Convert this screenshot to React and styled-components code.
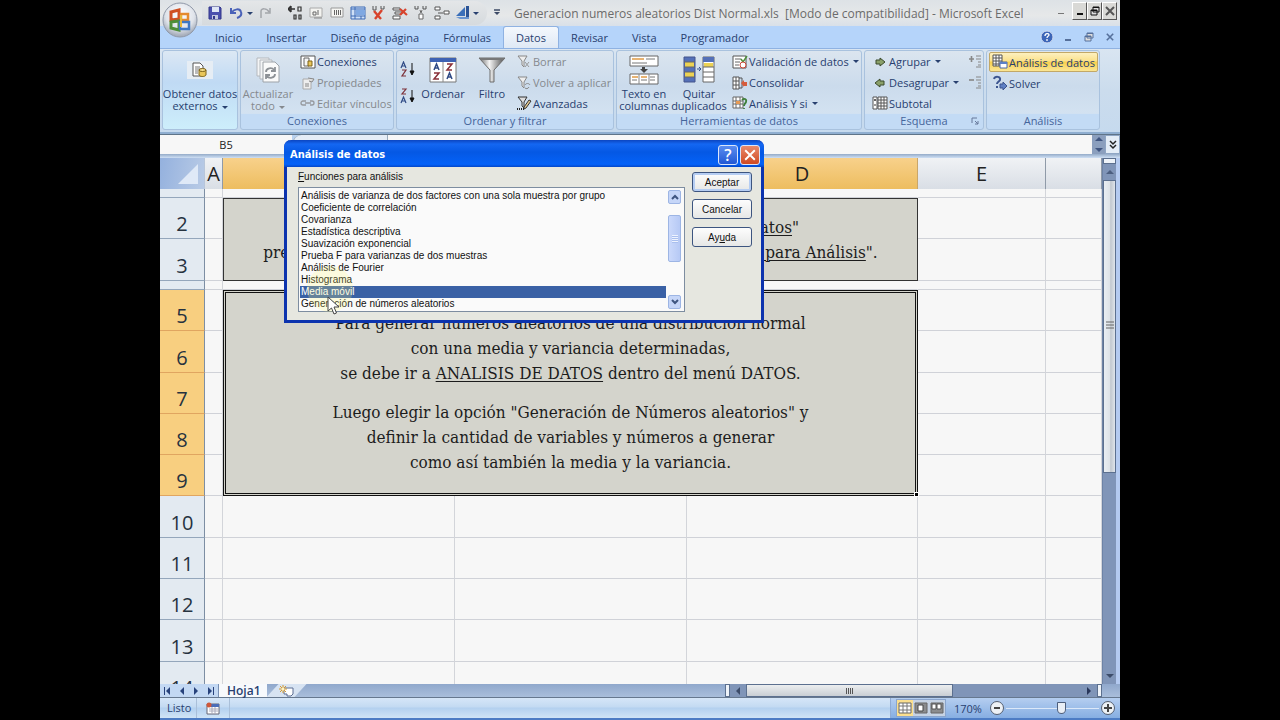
import React, { useState } from "react"
import styled, { createGlobalStyle, css } from "styled-components"

const rows = [
  { n: 1, h: 9, cut: true },
  { n: 2, h: 41 },
  { n: 3, h: 42 },
  { n: 4, h: 9, cut: true },
  { n: 5, h: 41, active: true },
  { n: 6, h: 42, active: true },
  { n: 7, h: 41, active: true },
  { n: 8, h: 41, active: true },
  { n: 9, h: 41, active: true },
  { n: 10, h: 42 },
  { n: 11, h: 41 },
  { n: 12, h: 41 },
  { n: 13, h: 42 },
  { n: 14, h: 41 },
]

const tools = [
  "Análisis de varianza de dos factores con una sola muestra por grupo",
  "Coeficiente de correlación",
  "Covarianza",
  "Estadística descriptiva",
  "Suavización exponencial",
  "Prueba F para varianzas de dos muestras",
  "Análisis de Fourier",
  "Histograma",
  "Media móvil",
  "Generación de números aleatorios",
]

const tabs = [
  "Inicio",
  "Insertar",
  "Diseño de página",
  "Fórmulas",
  "Datos",
  "Revisar",
  "Vista",
  "Programador",
]

/* ---------- icons ---------- */

const Svg = ({ w = 16, h = 16, children }) => (
  <svg width={w} height={h} viewBox={`0 0 ${w} ${h}`} fill="none" aria-hidden="true">
    {children}
  </svg>
)

const OfficeLogo = () => (
  <svg width="36" height="36" viewBox="0 0 36 36" fill="none" aria-hidden="true">
    <defs>
      <radialGradient id="orb" cx="50%" cy="35%" r="60%">
        <stop offset="0" stopColor="#ffffff" />
        <stop offset="0.7" stopColor="#dfe3ea" />
        <stop offset="1" stopColor="#a9b0bd" />
      </radialGradient>
    </defs>
    <circle cx="18" cy="18" r="17" fill="url(#orb)" stroke="#8f98a8" />
    <path d="M9 10l8-2v9l-8 1z" stroke="#cf4f22" strokeWidth="3" />
    <path d="M19 12h7v6h-7z" stroke="#e58a2e" strokeWidth="2.5" />
    <path d="M9 20l8-1v9l-8-2z" stroke="#4f8f38" strokeWidth="3" />
    <path d="M18 20h9v7h-9z" stroke="#3d78c4" strokeWidth="2.5" />
    <path d="M19 13v12" stroke="#e8b73a" strokeWidth="2" />
  </svg>
)

const SaveIcon = () => (
  <Svg w={14} h={14}>
    <path d="M1 1h11l1 1v11H1z" fill="#4a4fae" stroke="#33378a" />
    <path d="M4 1h7v5H4z" fill="#dfe6f6" />
    <path d="M4 9h6v4H4z" fill="#c3c8e0" />
    <path d="M5 10h2v3H5z" fill="#33378a" />
  </Svg>
)
const UndoIcon = () => (
  <Svg w={14} h={14}>
    <path d="M2 2v5h5" stroke="#4a62b8" strokeWidth="2" />
    <path d="M3 6c2-3 8-4 9 0 1 3-1 5-4 6" stroke="#4a62b8" strokeWidth="2" />
  </Svg>
)
const RedoIcon = () => (
  <Svg w={14} h={14}>
    <path d="M3 12V5c0-3 6-3 8 1M12 2v5H7" stroke="#a3a6ab" strokeWidth="1.5" />
  </Svg>
)
const PrecisionIcon = () => (
  <Svg w={14} h={16}>
    <path d="M0 4h7M3 1v6M3 1L0 4l3 3" stroke="#333" strokeWidth="1.4" />
    <path d="M10 2h3v4h-3zM6 10h2v4H6zM11 10h2v4h-2z" stroke="#333" strokeWidth="1.2" />
  </Svg>
)
const LabelIcon = () => (
  <Svg w={14} h={14}>
    <path d="M1 2h12v9H1z" fill="#f3f3f0" stroke="#aaa" />
    <path d="M4 6h3v3H4zM9 4v5" stroke="#666" />
    <path d="M5 12h8" stroke="#888" />
  </Svg>
)
const BarsIcon = () => (
  <Svg w={14} h={14}>
    <path d="M1 2h12v9H1z" fill="#f6f6f3" stroke="#999" />
    <path d="M4.5 4v5M6.5 4v5M8.5 4v5M10.5 4v5" stroke="#666" />
  </Svg>
)
const FreezeIcon = () => (
  <Svg w={16} h={14}>
    <path d="M1 1h14v12H1z" fill="#cfe0f7" stroke="#3c6ab5" />
    <path d="M1 3h14M1 10h14M5 1v12M11 10v3" stroke="#3c6ab5" />
    <path d="M6 4h9v5H6z" fill="#7fa8e2" />
  </Svg>
)
const DeleteColIcon = () => (
  <Svg w={14} h={16}>
    <path d="M1 1v4h3V1M9 1v3h3V1" stroke="#555" />
    <path d="M2 6l7 8M10 5l-7 9" stroke="#d8432c" strokeWidth="2.4" />
  </Svg>
)
const DeleteRowIcon = () => (
  <Svg w={16} h={14}>
    <path d="M1 2h7v2H1zM1 10h7v3H1zM3 6h7v2H3z" fill="#fff" stroke="#555" />
    <path d="M8 3l7 6M14 3L8 9" stroke="#d8432c" strokeWidth="2.2" />
  </Svg>
)
const InsertColIcon = () => (
  <Svg w={14} h={16}>
    <path d="M1 1v3h3V1M9 1v3h3V1" stroke="#555" />
    <path d="M5 9h4v5H5zM6 5l1 3 1-3" fill="#fff" stroke="#666" />
  </Svg>
)
const InsertRowIcon = () => (
  <Svg w={16} h={14}>
    <path d="M1 1h5v3H1zM1 10h5v3H1zM10 5h5v3h-5z" fill="#fff" stroke="#555" />
    <path d="M4 7h5" stroke="#555" />
  </Svg>
)
const SailIcon = () => (
  <Svg w={16} h={14}>
    <path d="M10 1v9L1 10z" fill="#3b6fb9" />
    <path d="M11 0h3v13h-3z" fill="#2c5496" />
    <path d="M1 11h13v2H5z" fill="#6a95d1" />
  </Svg>
)

const DocDataIcon = () => (
  <Svg w={20} h={18}>
    <path d="M3 2h7l3 3v10H3z" fill="#fff" stroke="#555" />
    <path d="M5 6h5M5 8h5M5 10h3M5 12h3" stroke="#777" />
    <path d="M9 9v5c1 2 6 2 7 0V9" fill="#e9c65a" stroke="#7c6218" />
    <ellipse cx="12.5" cy="9" rx="3.5" ry="1.5" fill="#f5dd8a" stroke="#7c6218" />
  </Svg>
)
const RefreshDocsIcon = () => (
  <Svg w={26} h={28}>
    <path d="M2 2h12v18H2z" fill="#f4f5f6" stroke="#b4b8bd" />
    <path d="M5 4h12v19H5z" fill="#f4f5f6" stroke="#b4b8bd" />
    <path d="M8 6h12l4 4v16H8z" fill="#fafafa" stroke="#9da2a8" />
    <path d="M11 16c0-4 6-5 8-2M20 11v4h-4M20 18c0 4-6 5-8 2M11 23v-4h4" stroke="#8d9196" strokeWidth="1.8" />
  </Svg>
)
const ConnIcon = () => (
  <Svg w={16} h={14}>
    <path d="M1 1h14v12H1z" fill="#fff" stroke="#555" />
    <path d="M4 3h5v8H4z" fill="#f5f5f5" stroke="#666" />
    <path d="M8 6h4v5H8z" fill="#e9c65a" stroke="#7c6218" />
  </Svg>
)
const PropsIcon = () => (
  <Svg w={16} h={14}>
    <path d="M3 3h8v10H3z" fill="#eee" stroke="#aaa" />
    <path d="M5 8h4M5 10h4M8 2l6 1-2 3-3-1" fill="#ddd" stroke="#888" />
  </Svg>
)
const LinkIcon = () => (
  <Svg w={16} h={14}>
    <path d="M6 5H3a2 2 0 000 4h3M10 5h2a2 2 0 010 4h-2M5 7h6" stroke="#96999e" strokeWidth="1.3" />
  </Svg>
)
const SortIcon = ({ desc }) => (
  <Svg w={16} h={16}>
    <g stroke={desc ? "#7d3038" : "#2f4a85"} strokeWidth="1.2">
      {desc ? <path d="M2 1h4L2 6h4" /> : <path d="M1 7l2.5-6L6 7M2 5h3" />}
    </g>
    <g stroke={desc ? "#2f4a85" : "#7d3038"} strokeWidth="1.2">
      {desc ? <path d="M1 15l2.5-6L6 15M2 13h3" /> : <path d="M2 9h4l-4 6h4" />}
    </g>
    <path d="M12 2v11M10 10l2 4 2-4z" stroke="#111" fill="#111" />
  </Svg>
)
const SortDialogIcon = () => (
  <Svg w={28} h={26}>
    <path d="M1 1h26v24H1z" fill="#fff" stroke="#777" />
    <path d="M1 1h26v4H1z" fill="#3e62b3" />
    <path d="M14 5v20" stroke="#888" />
    <path d="M5 13l2.5-6 2.5 6M6 11h3M18 22l2.5-6 2.5 6M19 20h3" stroke="#2f4a85" strokeWidth="1.5" />
    <path d="M5 16h5l-5 6h5M18 7h5l-5 6h5" stroke="#8a3038" strokeWidth="1.5" />
  </Svg>
)
const FunnelIcon = () => (
  <Svg w={28} h={28}>
    <defs>
      <linearGradient id="metal">
        <stop offset="0" stopColor="#666" />
        <stop offset="0.4" stopColor="#f4f4f4" />
        <stop offset="1" stopColor="#4b4b4b" />
      </linearGradient>
    </defs>
    <path d="M1 2h26L16 14v12h-4V14z" fill="url(#metal)" stroke="#6c6c6c" />
    <path d="M1 2h26l-2 2H3z" fill="#777" />
  </Svg>
)
const MiniFunnel = ({ kind }) => (
  <Svg w={16} h={16}>
    <path
      d="M2 2h9L8 7v6L6 11V7z"
      fill={kind === "adv" ? "#ddd" : "#eee"}
      stroke={kind === "adv" ? "#333" : "#888"}
    />
    {kind === "clear" && <path d="M9 8l4 5M13 8l-4 5" stroke="#999" />}
    {kind === "again" && <path d="M9 10c1-2 4-2 5 0M13 12c-1 2-3 2-4 1" stroke="#888" />}
    {kind === "adv" && (
      <>
        <path d="M8 12l5-7 2 1-5 7-2 1z" fill="#e3c68c" stroke="#333" />
        <path d="M1 14h8" stroke="#222" strokeDasharray="1 1" strokeWidth="2" />
      </>
    )}
  </Svg>
)
const TextColsIcon = () => (
  <Svg w={30} h={30}>
    <path d="M1 1h28v10H1zM1 19h28v10H1z" fill="#fff" stroke="#666" />
    <path d="M3 4h12M3 22h6M12 22h6" stroke="#e09a45" strokeWidth="1.6" />
    <path d="M17 4h9M3 8h15M3 25h5M12 25h6M21 25h5M21 22h5" stroke="#777" />
    <path d="M10 19v10M20 19v10" stroke="#888" />
    <path d="M13 12h3v2h3l-4 4-4-4h2z" fill="#444" />
  </Svg>
)
const DupIcon = () => (
  <Svg w={32} h={28}>
    <path d="M1 1h11v25H1z" fill="#5470b8" stroke="#44558c" />
    <path d="M2 6h9v5H2zM2 16h9v5H2z" fill="#ecd254" />
    <path d="M20 1h11v25H20z" fill="#fff" stroke="#666" />
    <path d="M20 1h11v5H20z" fill="#5470b8" />
    <path d="M21 7h9v4h-9z" fill="#ecd254" />
    <path d="M20 11h11M20 16h11M20 21h11M1 6h11M1 11h11M1 16h11M1 21h11" stroke="#666" />
    <path d="M14 13h4M16 11l2 2-2 2" stroke="#33518f" />
  </Svg>
)
const ValidIcon = () => (
  <Svg w={16} h={14}>
    <path d="M1 1h13v12H1z" fill="#fff" stroke="#555" />
    <path d="M3 4h6M3 7h5M3 10h4" stroke="#666" />
    <path d="M9 4l2 3 4-6" stroke="#4c8f3a" strokeWidth="1.5" />
    <circle cx="11" cy="10" r="3" fill="#fff" stroke="#c94536" />
  </Svg>
)
const ConsolIcon = () => (
  <Svg w={16} h={14}>
    <path d="M1 1h6v12H1zM1 5h6M1 9h6M4 1v12" fill="#fff" stroke="#555" />
    <path d="M7 2h3v10H7" stroke="#555" />
    <path d="M9 7l3-3v2h3v4h-3v1z" fill="#d65c3c" />
  </Svg>
)
const WhatIfIcon = () => (
  <Svg w={16} h={14}>
    <path d="M1 1h10v11H1zM1 5h10M1 8h10M4 1v11M8 1v11" fill="#fff" stroke="#666" />
    <path d="M4 5h4v3H4z" fill="#e59a55" />
    <path d="M10 4c2-2 5-1 4 2-1 2-2 2-2 4M12 12v1" stroke="#3f7f3a" strokeWidth="1.8" />
  </Svg>
)
const GroupArrow = ({ left }) => (
  <Svg w={16} h={14}>
    <g transform={left ? "matrix(-1 0 0 1 16 0)" : undefined}>
      <path d="M4 5h4V3l5 4-5 4V9H4z" fill="#8aa06a" stroke="#3b4a2c" />
    </g>
  </Svg>
)
const SubtotalIcon = () => (
  <Svg w={16} h={14}>
    <path d="M1 1h4v12H1zM6 1h9v12H6zM6 4h9M6 7h9M6 10h9M9 1v12M12 1v12" fill="#fff" stroke="#555" />
    <path d="M2 4h2M3 3v2M2 9h2" stroke="#333" />
  </Svg>
)
const DetailIcon = ({ minus }) => (
  <Svg w={14} h={14}>
    <path d={minus ? "M1 4h5" : "M1 4h5M3.5 1v6"} stroke="#888" strokeWidth="1.6" />
    <path d="M8 1h5M8 4h5M10 7h3M10 10h3M8 12h5" stroke="#888" />
  </Svg>
)
const AnalysisIcon = () => (
  <Svg w={16} h={16}>
    <path d="M1 1h9v11H1zM1 4h9M1 7h9M1 10h9M4 1v11M7 1v11" fill="#fff" stroke="#555" />
    <path d="M8 8h7v6H8z" fill="#fff" stroke="#4a68a8" />
    <path d="M8 8h7v2H8z" fill="#5c80c8" />
  </Svg>
)
const SolverIcon = () => (
  <Svg w={16} h={16}>
    <path d="M2 4c1-3 7-3 6 1-1 2-3 2-3 4M5 11v2" stroke="#3c5590" strokeWidth="2" />
    <path d="M8 9h3V7l4 4-4 4v-2H8z" fill="#5f80c4" stroke="#3c5590" />
  </Svg>
)
const LauncherIcon = () => (
  <Svg w={8} h={8}>
    <path d="M1 6V1h5M4 4l3 3M7 4v3H4" stroke="#66789a" />
  </Svg>
)
const HelpIcon = () => (
  <Svg w={14} h={14}>
    <circle cx="7" cy="7" r="6" fill="#3d66b8" stroke="#cfd9ee" />
    <path d="M5 6c0-3 4-3 4-1 0 1-2 1-2 3M7 9v2" stroke="#fff" strokeWidth="1.3" />
  </Svg>
)
const MinIcon = ({ color = "#111" }) => (
  <Svg w={10} h={10}>
    <path d="M2 8h6" stroke={color} strokeWidth="2" />
  </Svg>
)
const RestoreIcon = ({ color = "#111" }) => (
  <Svg w={10} h={10}>
    <path d="M3 1h6v5H3zM1 4h6v5H1z" stroke={color} fill="#ddd" />
    <path d="M3 1.5h6M1 4.5h6" stroke={color} />
  </Svg>
)
const CloseIcon = ({ color = "#555", size = 10, weight = 2 }) => (
  <svg width={size} height={size} viewBox="0 0 10 10" aria-hidden="true">
    <path d="M1 1l8 8M9 1L1 9" stroke={color} strokeWidth={weight} />
  </svg>
)
const NewSheetIcon = () => (
  <Svg w={16} h={12}>
    <path d="M5 3h9v6l-2 2H8V9H5z" fill="#fff" stroke="#5b6d92" />
    <path d="M4 0v8M0 4h8M1 1l6 6M7 1L1 7" stroke="#d89a2c" />
    <circle cx="4" cy="4" r="1.5" fill="#fff4c0" />
  </Svg>
)
const MacroIcon = () => (
  <Svg w={14} h={13}>
    <path d="M1 2h12v10H1z" fill="#fff" stroke="#667" />
    <path d="M4 2h9v3H4z" fill="#4a6cb8" />
    <path d="M3 7h9M3 9h9M6 5v7M9 5v7" stroke="#aab" />
    <circle cx="3" cy="3" r="2.5" fill="#d0573a" />
  </Svg>
)
const ViewIcon = ({ kind }) => (
  <Svg w={14} h={12}>
    <path d="M1 1h12v10H1z" fill={kind === "grid" ? "#fff" : "#8b8c8e"} stroke="#666" />
    {kind === "grid" && <path d="M1 4h12M1 8h12M5 1v10M9 1v10" stroke="#777" />}
    {kind === "page" && <path d="M4 3h5v6H4z" fill="#fff" stroke="#444" />}
    {kind === "break" && <path d="M2 2h4v5H2zM7 2h4v5H7z" fill="#fff" stroke="#555" />}
  </Svg>
)
const Cursor = () => (
  <Svg w={14} h={20}>
    <path d="M1 1v14l3.5-3 2.5 6 2.5-1-2.5-6H12z" fill="#fff" stroke="#444" />
  </Svg>
)
const Chevron = ({ up }) => (
  <Svg w={8} h={6}>
    <path d={up ? "M1 5l3-3 3 3" : "M1 1l3 3 3-3"} stroke="#3f5580" strokeWidth="2" />
  </Svg>
)
const Tri = ({ dir = "down", color = "#3f5580" }) => {
  const shapes = {
    down: "M0 2h8L4 6z",
    up: "M0 6h8L4 2z",
    left: "M6 0v8L2 4z",
    right: "M2 0v8l4-4z",
  }
  return (
    <Svg w={8} h={8}>
      <path d={shapes[dir]} fill={color} />
    </Svg>
  )
}

/* ---------- ribbon ---------- */

const Small = ({ icon, label, arrow, disabled, hot }) => (
  <SmallButton disabled={disabled} $hot={hot}>
    <IconSlot>{icon}</IconSlot>
    {label}
    {arrow && <Caret />}
  </SmallButton>
)

const Large = ({ icon, lines, arrow, disabled, width }) => (
  <LargeButton disabled={disabled} $width={width}>
    <LargeIcon>{icon}</LargeIcon>
    {lines.map((line, i) => (
      <span key={line}>
        {line}
        {arrow && i === lines.length - 1 && <Caret />}
      </span>
    ))}
  </LargeButton>
)

const Ribbon = () => (
  <RibbonBar>
    <Group $width={76} $lit>
      <GroupBody>
        <Large width={74} icon={<IconCard><DocDataIcon /></IconCard>} lines={["Obtener datos", "externos"]} arrow />
      </GroupBody>
    </Group>
    <Group $width={154}>
      <GroupBody>
        <Large width={54} icon={<RefreshDocsIcon />} lines={["Actualizar", "todo"]} arrow disabled />
        <Stack>
          <Small icon={<ConnIcon />} label="Conexiones" />
          <Small icon={<PropsIcon />} label="Propiedades" disabled />
          <Small icon={<LinkIcon />} label="Editar vínculos" disabled />
        </Stack>
      </GroupBody>
      <GroupTitle>Conexiones</GroupTitle>
    </Group>
    <Group $width={218}>
      <GroupBody>
        <SortStack>
          <IconButton aria-label="Ordenar de A a Z"><SortIcon /></IconButton>
          <IconButton aria-label="Ordenar de Z a A"><SortIcon desc /></IconButton>
        </SortStack>
        <Large width={48} icon={<SortDialogIcon />} lines={["Ordenar"]} />
        <Divider />
        <Large width={38} icon={<FunnelIcon />} lines={["Filtro"]} />
        <Stack>
          <Small icon={<MiniFunnel kind="clear" />} label="Borrar" disabled />
          <Small icon={<MiniFunnel kind="again" />} label="Volver a aplicar" disabled />
          <Small icon={<MiniFunnel kind="adv" />} label="Avanzadas" />
        </Stack>
      </GroupBody>
      <GroupTitle>Ordenar y filtrar</GroupTitle>
    </Group>
    <Group $width={246}>
      <GroupBody>
        <Large width={54} icon={<TextColsIcon />} lines={["Texto en", "columnas"]} />
        <Large width={56} icon={<DupIcon />} lines={["Quitar", "duplicados"]} />
        <Stack>
          <Small icon={<ValidIcon />} label="Validación de datos" arrow />
          <Small icon={<ConsolIcon />} label="Consolidar" />
          <Small icon={<WhatIfIcon />} label="Análisis Y si" arrow />
        </Stack>
      </GroupBody>
      <GroupTitle>Herramientas de datos</GroupTitle>
    </Group>
    <Group $width={120}>
      <GroupBody>
        <Stack $inset>
          <Small icon={<GroupArrow />} label="Agrupar" arrow />
          <Small icon={<GroupArrow left />} label="Desagrupar" arrow />
          <Small icon={<SubtotalIcon />} label="Subtotal" />
        </Stack>
        <Stack $end>
          <IconButton aria-label="Mostrar detalle" disabled><DetailIcon /></IconButton>
          <IconButton aria-label="Ocultar detalle" disabled><DetailIcon minus /></IconButton>
        </Stack>
      </GroupBody>
      <GroupTitle>
        Esquema
        <Launcher aria-label="Configuración de esquema"><LauncherIcon /></Launcher>
      </GroupTitle>
    </Group>
    <Group $width={114}>
      <GroupBody>
        <Stack $wide>
          <Small icon={<AnalysisIcon />} label="Análisis de datos" hot />
          <Small icon={<SolverIcon />} label="Solver" />
        </Stack>
      </GroupBody>
      <GroupTitle>Análisis</GroupTitle>
    </Group>
  </RibbonBar>
)

/* ---------- sheet ---------- */

const Sheet = () => (
  <SheetTable>
    <colgroup>
      <Col $width={45} />
      <Col $width={18} />
      <Col $width={232} />
      <Col $width={232} />
      <Col $width={231} />
      <Col $width={128} />
      <col />
    </colgroup>
    <thead>
      <tr>
        <Corner aria-label="Seleccionar todo">
          <Svg w={36} h={24}>
            <path d="M33 2v20H13z" fill="#dfe9f7" />
          </Svg>
        </Corner>
        {["A", "B", "C", "D", "E", ""].map((c, i) => (
          <ColHead key={i} scope="col" $active={"BCD".includes(c) && c !== ""}>
            {c}
          </ColHead>
        ))}
      </tr>
    </thead>
    <tbody>
      {rows.map((row) => (
        <tr key={row.n}>
          <RowHead scope="row" $h={row.h} $active={row.active}>
            {!row.cut && <RowNumber>{row.n}</RowNumber>}
          </RowHead>
          <Cell />
          {row.n === 2 && (
            <Note colSpan={3} rowSpan={2}>
              <p>
                Para poder usar la función incorporada "<u>Análisis de Datos</u>"
                <br />
                previamente se debe instalar el complemento de "<u>Herramientas para Análisis</u>".
              </p>
            </Note>
          )}
          {row.n === 5 && (
            <Note colSpan={3} rowSpan={5} $selected>
              <p>
                Para generar números aleatorios de una distribución normal
                <br />
                con una media y variancia determinadas,
                <br />
                se debe ir a <u>ANALISIS DE DATOS</u> dentro del menú DATOS.
              </p>
              <p>
                Luego elegir la opción "Generación de Números aleatorios" y
                <br />
                definir la cantidad de variables y números a generar
                <br />
                como así también la media y la variancia.
              </p>
              <FillHandle />
            </Note>
          )}
          {(row.cut || row.n > 9) && (
            <>
              <Cell $plain={row.cut} />
              <Cell $plain={row.cut} />
              <Cell $plain={row.cut} />
            </>
          )}
          <Cell />
          <Cell />
        </tr>
      ))}
    </tbody>
  </SheetTable>
)

/* ---------- dialog ---------- */

const AnalysisDialog = () => {
  const [tool, setTool] = useState("Media móvil")

  return (
    <Dialog role="dialog" aria-labelledby="dlg-title">
      <DialogBar>
        <DialogTitle id="dlg-title">Análisis de datos</DialogTitle>
        <BarButton aria-label="Ayuda de la ventana">?</BarButton>
        <BarButton aria-label="Cerrar" $red>
          <CloseIcon color="#fff" size={12} weight={1.6} />
        </BarButton>
      </DialogBar>
      <DialogBody>
        <ListColumn>
          <ListLabel htmlFor="tools">
            <u>F</u>unciones para análisis
          </ListLabel>
          <ListFrame>
            <List id="tools" size={10} value={tool} onChange={(e) => setTool(e.target.value)}>
              {tools.map((t) => (
                <option key={t} value={t}>
                  {t}
                </option>
              ))}
            </List>
            <ListScroll>
              <ScrollKey aria-label="Subir" tabIndex={-1}><Chevron up /></ScrollKey>
              <ListTrack>
                <ListThumb />
              </ListTrack>
              <ScrollKey aria-label="Bajar" tabIndex={-1}><Chevron /></ScrollKey>
            </ListScroll>
          </ListFrame>
        </ListColumn>
        <DialogButtons>
          <XpButton $main>Aceptar</XpButton>
          <XpButton>Cancelar</XpButton>
          <XpButton>
            Ay<u>u</u>da
          </XpButton>
        </DialogButtons>
      </DialogBody>
      <Halo />
      <Pointer>
        <Cursor />
      </Pointer>
    </Dialog>
  )
}

const App = () => {
  const [zoom, setZoom] = useState(61)

  return (
    <>
      <GlobalStyle />
      <Backdrop>
        <Window>
          <TitleBar>
            <Orb aria-label="Botón de Office"><OfficeLogo /></Orb>
            <QuickBar>
              <ToolKey aria-label="Guardar"><SaveIcon /></ToolKey>
              <ToolKey aria-label="Deshacer"><UndoIcon /></ToolKey>
              <ToolKey aria-label="Opciones de deshacer" $slim><Caret $flush /></ToolKey>
              <ToolKey aria-label="Rehacer"><RedoIcon /></ToolKey>
              <QuickGap />
              <ToolKey aria-label="Aumentar decimales"><PrecisionIcon /></ToolKey>
              <ToolKey aria-label="Etiqueta"><LabelIcon /></ToolKey>
              <ToolKey aria-label="Barras"><BarsIcon /></ToolKey>
              <ToolKey aria-label="Inmovilizar"><FreezeIcon /></ToolKey>
              <ToolKey aria-label="Eliminar columnas"><DeleteColIcon /></ToolKey>
              <ToolKey aria-label="Eliminar filas"><DeleteRowIcon /></ToolKey>
              <ToolKey aria-label="Insertar columnas"><InsertColIcon /></ToolKey>
              <ToolKey aria-label="Insertar filas"><InsertRowIcon /></ToolKey>
              <ToolKey aria-label="Formas"><SailIcon /></ToolKey>
              <Caret $flush />
            </QuickBar>
            <QuickMore aria-label="Personalizar barra">
              <Svg w={6} h={8}>
                <path d="M0 1h6" stroke="#3c4a66" strokeWidth="1.5" />
                <path d="M0 3h6L3 6z" fill="#3c4a66" />
              </Svg>
            </QuickMore>
            <Title>{"Generacion numeros aleatorios Dist Normal.xls  [Modo de compatibilidad] - Microsoft Excel"}</Title>
            <GhostDash />
            <SysButton aria-label="Minimizar"><MinIcon /></SysButton>
            <SysButton aria-label="Restaurar"><RestoreIcon /></SysButton>
            <SysButton aria-label="Cerrar Excel"><CloseIcon /></SysButton>
          </TitleBar>

          <TabRow>
            {tabs.map((t) => (
              <Tab key={t} $active={t === "Datos"}>
                {t}
              </Tab>
            ))}
            <TabTools>
              <ToolKey aria-label="Ayuda de Excel"><HelpIcon /></ToolKey>
              <ToolKey aria-label="Minimizar libro"><MinIcon color="#56709b" /></ToolKey>
              <ToolKey aria-label="Restaurar libro"><RestoreIcon color="#56709b" /></ToolKey>
              <ToolKey aria-label="Cerrar libro"><CloseIcon color="#56709b" size={8} /></ToolKey>
            </TabTools>
          </TabRow>

          <Ribbon />

          <FormulaBar>
            <NameBox aria-label="Cuadro de nombres" defaultValue="B5" />
            <FxArea />
            <FormulaInput aria-label="Barra de fórmulas" />
            <FormulaSpin>
              <Tri dir="up" />
              <Tri />
            </FormulaSpin>
            <Expand aria-label="Expandir barra de fórmulas">
              <Svg w={8} h={10}>
                <path d="M1 1l3 3 3-3M1 5l3 3 3-3" stroke="#222" strokeWidth="1.5" />
              </Svg>
            </Expand>
          </FormulaBar>

          <Workspace>
            <SheetArea>
              <Sheet />
            </SheetArea>
            <VScroll>
              <Splitter />
              <VKey><Tri dir="up" color="#4c5f80" /></VKey>
              <VThumb>
                <Svg w={8} h={10}>
                  <path d="M0 1h8M0 4h8M0 7h8" stroke="#666" />
                </Svg>
              </VThumb>
              <VTrack />
              <VKey><Tri color="#3c4c6a" /></VKey>
            </VScroll>
          </Workspace>

          <SheetBar>
            <SheetNav>
              <NavKey aria-label="Primera hoja"><Svg w={8} h={8}><path d="M1 0v8h1V0zM7 0v8L3 4z" fill="#28427c" /></Svg></NavKey>
              <NavKey aria-label="Hoja anterior"><Tri dir="left" color="#28427c" /></NavKey>
              <NavKey aria-label="Hoja siguiente"><Tri dir="right" color="#28427c" /></NavKey>
              <NavKey aria-label="Última hoja"><Svg w={8} h={8}><path d="M6 0v8h1V0zM1 0v8l4-4z" fill="#28427c" /></Svg></NavKey>
            </SheetNav>
            <SheetTab>Hoja1</SheetTab>
            <NewSheet aria-label="Insertar hoja de cálculo"><NewSheetIcon /></NewSheet>
            <HScroll>
              <HSplit />
              <HKey><Tri dir="left" color="#3c4c6a" /></HKey>
              <HThumb>
                <Svg w={10} h={6}>
                  <path d="M1.5 0v6M3.5 0v6M5.5 0v6M7.5 0v6" stroke="#555" />
                </Svg>
              </HThumb>
              <HTrack />
              <HKey><Tri dir="right" color="#28365a" /></HKey>
              <HSplit />
            </HScroll>
          </SheetBar>

          <StatusBar>
            <StatusText>Listo</StatusText>
            <StatusMacro aria-label="Grabar macro"><MacroIcon /></StatusMacro>
            <StatusTools>
              <ViewSet>
                <ViewKey aria-label="Normal" $active><ViewIcon kind="grid" /></ViewKey>
                <ViewKey aria-label="Diseño de página"><ViewIcon kind="page" /></ViewKey>
                <ViewKey aria-label="Salto de página"><ViewIcon kind="break" /></ViewKey>
              </ViewSet>
              <ZoomLabel htmlFor="zoom">170%</ZoomLabel>
              <ZoomKey aria-label="Alejar"><Svg w={8} h={8}><path d="M1 4h6" stroke="#444" strokeWidth="2" /></Svg></ZoomKey>
              <ZoomRange id="zoom" type="range" value={zoom} onChange={(e) => setZoom(e.target.value)} />
              <ZoomKey aria-label="Acercar"><Svg w={8} h={8}><path d="M0 4h8M4 0v8" stroke="#444" strokeWidth="2" /></Svg></ZoomKey>
            </StatusTools>
          </StatusBar>

          <AnalysisDialog />
        </Window>
      </Backdrop>
    </>
  )
}

export default App

const GlobalStyle = createGlobalStyle`
  * {
    box-sizing: border-box;
  }
  body {
    margin: 0;
    background: #000;
  }
  body, button, input, select {
    font-family: "Open Sans", "Noto Sans", sans-serif;
    font-size: 11px;
  }
  button {
    margin: 0;
    padding: 0;
    border: 0;
    background: none;
    color: inherit;
  }
  svg {
    display: block;
    flex: none;
  }
`

const Backdrop = styled.div`
  display: flex;
  justify-content: center;
  height: 100vh;
  background: #000;
`
const Window = styled.main`
  position: relative;
  display: flex;
  flex-direction: column;
  aspect-ratio: 4 / 3;
  height: 100%;
  overflow: hidden;
  background: #bdd6f5;
  color: #28406f;
`

const TitleBar = styled.header`
  display: flex;
  align-items: center;
  height: 26px;
  flex: none;
  padding-right: 3px;
  background: linear-gradient(#dde2e6, #e6e8e9 60%, #d9e0e8);
`
const Orb = styled.button`
  z-index: 1;
  align-self: flex-start;
  width: 38px;
  padding: 2px;
`
const QuickBar = styled.div`
  display: flex;
  align-items: center;
  height: 24px;
  margin-left: 4px;
  padding: 0 8px 0 2px;
  border-radius: 0 12px 12px 0;
  background: linear-gradient(#e4e6e8, #d6dade);
`
const ToolKey = styled.button`
  display: flex;
  align-items: center;
  justify-content: center;
  width: ${(p) => (p.$slim ? 8 : 21)}px;
  height: 20px;
`
const QuickGap = styled.span`
  width: 9px;
`
const Caret = styled.i`
  display: inline-block;
  margin-left: ${(p) => (p.$flush ? 0 : 4)}px;
  border: 3px solid transparent;
  border-top-color: currentColor;
  border-bottom: 0;
  vertical-align: middle;
`
const QuickMore = styled.button`
  margin: 0 14px 0 7px;
`
const Title = styled.span`
  flex: 1;
  color: #6b6b6b;
  font-size: 12px;
  white-space: pre;
`
const GhostDash = styled.i`
  width: 6px;
  height: 1px;
  margin-right: 8px;
  background: #777;
`
const SysButton = styled.button`
  display: flex;
  align-items: center;
  justify-content: center;
  width: 15px;
  height: 18px;
  margin-bottom: 4px;
  border: 1px solid #555;
  border-top-color: #fff;
  border-left-color: #fff;
  background: #d9d9d6;
`

const TabRow = styled.nav`
  display: flex;
  flex: none;
  height: 22px;
  padding-left: 43px;
  background: #b5d4fa;
`
const Tab = styled.button`
  height: 22px;
  padding: 0 12px;
  ${(p) =>
    p.$active &&
    css`
      border: 1px solid #8fb2e2;
      border-bottom: 0;
      border-radius: 3px 3px 0 0;
      background: linear-gradient(#f4f8fd, #dfe9f5);
    `}
`
const TabTools = styled.div`
  display: flex;
  align-items: center;
  margin-left: auto;
`

const RibbonBar = styled.section`
  display: flex;
  flex: none;
  gap: 2px;
  height: 86px;
  padding: 1px 2px 2px;
  border-top: 1px solid #8fb2e2;
  border-bottom: 2px solid #8faed0;
  background: linear-gradient(#d9e5f1, #cbdced 50%, #c6daee);
`
const Group = styled.div`
  display: flex;
  flex-direction: column;
  flex: none;
  width: ${(p) => p.$width}px;
  border: 1px solid #a9c2de;
  border-radius: 3px;
  background: ${(p) =>
    p.$lit
      ? "linear-gradient(#dce8f4, #c0daf4 40%, #cdeefb)"
      : "linear-gradient(#dbe5ef, #cbdbec 45%, #d3e2f1 80%, #c3dbf5 81%)"};
`
const GroupBody = styled.div`
  display: flex;
  flex: 1;
  min-height: 0;
`
const GroupTitle = styled.div`
  position: relative;
  height: 16px;
  color: #45659b;
  line-height: 16px;
  text-align: center;
`
const Launcher = styled.button`
  position: absolute;
  right: 4px;
  bottom: 4px;
`
const Stack = styled.div`
  display: flex;
  flex-direction: column;
  gap: 1px;
  padding: 1px 2px 0 ${(p) => (p.$inset ? 4 : 2)}px;
  margin-left: ${(p) => (p.$end ? "auto" : 0)};
  flex: ${(p) => (p.$wide ? 1 : "none")};
`
const SortStack = styled(Stack)`
  gap: 8px;
  padding: 8px 2px;
`
const Divider = styled.i`
  width: 1px;
  margin: 4px 3px;
  background: #a3b9d3;
`
const SmallButton = styled.button`
  display: flex;
  align-items: center;
  height: 20px;
  padding: 0 2px;
  border: 1px solid transparent;
  white-space: nowrap;
  &:disabled {
    color: #85898e;
  }
  ${(p) =>
    p.$hot &&
    css`
      border-color: #c2a867;
      border-radius: 2px;
      background: linear-gradient(#fdf0bf, #fbe18a 45%, #f7cf4c 50%, #fbe694);
    `}
`
const IconSlot = styled.span`
  flex: none;
  width: 17px;
`
const IconButton = styled.button`
  display: flex;
  align-items: center;
  justify-content: center;
  width: 18px;
  height: 20px;
`
const LargeButton = styled.button`
  display: flex;
  flex: none;
  flex-direction: column;
  align-items: center;
  width: ${(p) => p.$width}px;
  padding-top: 4px;
  line-height: 12px;
  white-space: nowrap;
  &:disabled {
    color: #85898e;
  }
`
const LargeIcon = styled.span`
  display: flex;
  flex: none;
  align-items: center;
  justify-content: center;
  height: 30px;
  margin-bottom: 3px;
`
const IconCard = styled.span`
  padding: 0 3px;
  background: #e6edf4;
`

const FormulaBar = styled.div`
  display: flex;
  flex: none;
  height: 24px;
  padding-bottom: 4px;
  border-top: 1px solid #5f7488;
  background: linear-gradient(#b9d2ef 80%, #8fa6c4 81%, #cfe0f5);
`
const NameBox = styled.input`
  width: 132px;
  padding: 0;
  border: 0;
  background: #f7f7f7;
  color: #222;
  text-align: center;
`
const FxArea = styled.i`
  width: 96px;
  border-right: 1px solid #9ab;
  border-left: 1px solid #9ab;
  border-radius: 12px 0 0 12px;
  background: #e5edf6;
`
const FormulaInput = styled.input`
  flex: 1;
  min-width: 0;
  border: 0;
  background: #f7f7f7;
`
const FormulaSpin = styled.div`
  display: flex;
  flex-direction: column;
  align-items: center;
  justify-content: space-between;
  width: 13px;
  background: #8b9fbe;
`
const Expand = styled.button`
  display: flex;
  align-items: center;
  justify-content: center;
  width: 15px;
  border: 1px solid #8fa6c4;
  background: #e4edf7;
`

const Workspace = styled.div`
  display: flex;
  flex: 1;
  min-height: 0;
  padding-right: 4px;
  background: #b4caf0;
`
const SheetArea = styled.div`
  flex: 1;
  overflow: hidden;
  background: #f7f7f7;
`
const SheetTable = styled.table`
  width: 100%;
  border-spacing: 0;
  table-layout: fixed;
`
const Col = styled.col`
  width: ${(p) => p.$width}px;
`
const Corner = styled.th`
  height: 31px;
  padding: 0 0 0 5px;
  border-right: 1px solid #b8c6da;
  background: linear-gradient(100deg, #94b1de, #b9cbe6);
`
const ColHead = styled.th`
  height: 31px;
  padding: 0;
  border-right: 1px solid ${(p) => (p.$active ? "#c9a66a" : "#8f9aa8")};
  background: ${(p) =>
    p.$active ? "linear-gradient(#f8d18b, #edbd5f)" : "linear-gradient(#f0f2f5, #d9dee5)"};
  color: #222;
  font-size: 20px;
  font-weight: 400;
  line-height: 30px;
`
const RowHead = styled.th`
  height: ${(p) => p.$h}px;
  padding: 0;
  border-right: 1px solid #7d8ea3;
  border-bottom: 1px solid ${(p) => (p.$active ? "#e0a560" : "#94a6bb")};
  background: ${(p) => (p.$active ? "#f8cf80" : "#e3eaf1")};
  color: #26323f;
  font-size: 20px;
  font-weight: 400;
  vertical-align: bottom;
`
const RowNumber = styled.div`
  line-height: 28px;
`
const Cell = styled.td`
  padding: 0;
  border-right: 1px solid #d3d5da;
  border-bottom: 1px solid #d0d2d8;
  ${(p) => p.$plain && "border-right-color: transparent;"}
`
const Note = styled.td`
  position: relative;
  padding: 0;
  border: ${(p) => (p.$selected ? "3px double #111" : "1px solid #333")};
  background: #d4d4cc;
  color: #1c1c1c;
  font-family: "DejaVu Serif Condensed", "DejaVu Serif", serif;
  font-size: 17px;
  line-height: 25px;
  text-align: center;
  white-space: nowrap;

  p {
    margin: 0;
  }
  p + p {
    margin-top: 14px;
  }
  u {
    text-underline-offset: 2px;
    text-decoration-thickness: 1px;
  }
`
const FillHandle = styled.i`
  position: absolute;
  right: -4px;
  bottom: -4px;
  width: 5px;
  height: 5px;
  border: 1px solid #fff;
  background: #000;
`

const VScroll = styled.div`
  display: flex;
  flex-direction: column;
  width: 14px;
  border-left: 1px solid #6d83a6;
  background: #8095b8;
`
const Splitter = styled.i`
  height: 6px;
  border: 1px solid #5c708f;
  background: #eef3f9;
`
const VKey = styled.div`
  display: flex;
  align-items: center;
  justify-content: center;
  height: 16px;
`
const VThumb = styled.div`
  display: flex;
  align-items: center;
  justify-content: center;
  flex: 292;
  border: 1px solid #5c708f;
  background: linear-gradient(90deg, #e9eef3, #dde2e7 55%, #c1c7ce 60%, #dfe4ea);
`
const VTrack = styled.div`
  flex: 196;
`

const SheetBar = styled.div`
  display: flex;
  flex: none;
  height: 14px;
  padding-right: 18px;
  border-bottom: 1px solid #66788f;
  background: linear-gradient(#90a8cc, #a9bedb);
`
const SheetNav = styled.div`
  display: flex;
  justify-content: space-around;
  width: 59px;
  border-right: 1px solid #7890b4;
  background: #c3d8f3;
`
const NavKey = styled.button`
  display: flex;
  align-items: center;
`
const SheetTab = styled.button`
  padding: 0 6px 0 8px;
  background: #f7f9fc;
  font-size: 12px;
  font-weight: 600;
  line-height: 13px;
`
const NewSheet = styled.button`
  padding: 0 12px;
  clip-path: polygon(12px 0, 100% 0, calc(100% - 12px) 100%, 0 100%);
  background: #d7e3f2;
`
const HScroll = styled.div`
  display: flex;
  width: 377px;
  margin-left: auto;
  background: #8095b8;
`
const HSplit = styled.i`
  width: 5px;
  border: 1px solid #5c708f;
  background: #eef3f9;
`
const HKey = styled.div`
  display: flex;
  align-items: center;
  justify-content: center;
  width: 16px;
`
const HThumb = styled.div`
  display: flex;
  align-items: center;
  justify-content: center;
  flex: 207;
  border: 1px solid #5c708f;
  background: linear-gradient(#eceeef, #c9ced4);
`
const HTrack = styled.div`
  flex: 129;
`

const StatusBar = styled.footer`
  display: flex;
  align-items: stretch;
  flex: none;
  height: 22px;
  border-bottom: 2px solid #4d7cc4;
  background: linear-gradient(#d6e6f8, #c3daf2 45%, #b3d0ef 50%, #d0e4f6);
`
const StatusText = styled.span`
  width: 37px;
  padding-left: 7px;
  border-right: 1px solid #a9bfd9;
  line-height: 20px;
`
const StatusMacro = styled.button`
  padding: 0 9px;
  border-right: 1px solid #a9bfd9;
`
const StatusTools = styled.div`
  display: flex;
  align-items: center;
  width: 230px;
  margin-left: auto;
  padding: 0 5px;
  border-left: 1px solid #8fabd4;
  background: linear-gradient(#b5cef0, #86aee2);
`
const ViewSet = styled.div`
  display: flex;
  border: 1px solid #8aa5cd;
`
const ViewKey = styled.button`
  padding: 2px 1px;
  background: ${(p) => (p.$active ? "#fbdf8e" : "#c6d3e4")};
`
const ZoomLabel = styled.label`
  margin: 0 8px;
`
const ZoomKey = styled.button`
  display: flex;
  align-items: center;
  justify-content: center;
  flex: none;
  width: 14px;
  height: 14px;
  border: 1px solid #555f70;
  border-radius: 50%;
  background: #edf1f5;
`
const ZoomRange = styled.input`
  flex: 1;
  min-width: 0;
  height: 16px;
  margin: 0 2px;
  appearance: none;
  background: linear-gradient(#dce8f8, #dce8f8) center / 100% 1px no-repeat;

  &::-webkit-slider-thumb {
    appearance: none;
    width: 9px;
    height: 12px;
    border: 1px solid #4e5f7c;
    border-radius: 1px 1px 5px 5px;
    background: #e9eef5;
  }
`

/* the XP style window that floats over the sheet */
const Dialog = styled.div`
  position: absolute;
  top: 140px;
  left: 124px;
  width: 480px;
  border: 3px solid #0c33ae;
  border-top: 0;
  border-radius: 7px 7px 0 0;
  background: #e6e7e0;
  color: #111;
`
const DialogBar = styled.div`
  display: flex;
  align-items: center;
  gap: 2px;
  height: 27px;
  margin: 0 -3px;
  padding: 2px 4px 0 6px;
  border-radius: 7px 7px 0 0;
  background: linear-gradient(#0c45c0, #1467f2 15%, #0558e4 45%, #0462f8 90%, #0346c8);
`
const DialogTitle = styled.h1`
  flex: 1;
  margin: 0;
  color: #fff;
  font-family: "DejaVu Sans Condensed", "Noto Sans", sans-serif;
  font-size: 11px;
`
const BarButton = styled.button`
  display: flex;
  align-items: center;
  justify-content: center;
  width: 20px;
  height: 20px;
  border: 1px solid #dbe6fb;
  border-radius: 3px;
  background: ${(p) => (p.$red ? "linear-gradient(#e98a6c, #d04a22)" : "linear-gradient(#5b8df0, #2258d4)")};
  color: #fff;
  font-size: 16px;
  font-weight: 600;
`
const DialogBody = styled.div`
  display: flex;
  gap: 7px;
  padding: 3px 9px 8px 11px;
`
const ListColumn = styled.div`
  flex: 1;
`
const ListLabel = styled.label`
  display: block;
  height: 17px;
  font-family: "Liberation Sans", sans-serif;
  font-size: 10px;
  line-height: 13px;
`
const ListFrame = styled.div`
  display: flex;
  height: 125px;
  padding: 1px;
  border: 1px solid #7d8da0;
  background: #fafafa;
`
const List = styled.select`
  flex: 1;
  min-width: 0;
  padding: 1px 0 0;
  border: 0;
  outline: 0;
  background: transparent;
  scrollbar-width: none;
  font-family: "Liberation Sans", sans-serif;
  font-size: 10px;

  option {
    height: 12px;
    min-height: 12px;
    padding: 0 1px;
    color: #111;
    font-size: 10px;
    line-height: 12px;
  }
  option:checked {
    background: #3a61a5 linear-gradient(#3a61a5, #3a61a5);
    color: #fff;
  }
`
const ListScroll = styled.div`
  display: flex;
  flex-direction: column;
  width: 17px;
  padding: 1px 2px;
`
const ScrollKey = styled.button`
  display: flex;
  align-items: center;
  justify-content: center;
  height: 14px;
  border: 1px solid #9db5e4;
  border-radius: 2px;
  background: #c6d6f8;
`
const ListTrack = styled.div`
  flex: 1;
  padding-top: 11px;
`
const ListThumb = styled.div`
  height: 47px;
  border: 1px solid #9db5e4;
  border-radius: 2px;
  background:
    repeating-linear-gradient(#eef3ff 0 1px, #a9bfee 1px 2px) center / 6px 8px no-repeat,
    linear-gradient(90deg, #cbd9fb, #b6c9f5);
`
const DialogButtons = styled.div`
  display: flex;
  flex-direction: column;
  gap: 7px;
  width: 60px;
  padding-top: 2px;
`
const XpButton = styled.button`
  height: 20px;
  border: 1px solid #3d5580;
  border-radius: 3px;
  background: linear-gradient(#fdfdfd, #e6e7e6);
  font-family: "Liberation Sans", sans-serif;
  font-size: 10px;
  ${(p) => p.$main && "box-shadow: inset 0 0 0 2px #b5cdf3;"}
  &:last-child {
    margin-top: 1px;
  }
`
const Halo = styled.i`
  position: absolute;
  top: 126px;
  left: 20px;
  width: 46px;
  height: 46px;
  border-radius: 50%;
  background: rgba(255, 250, 120, 0.22);
  pointer-events: none;
`
const Pointer = styled.span`
  position: absolute;
  top: 156px;
  left: 40px;
  pointer-events: none;
`
